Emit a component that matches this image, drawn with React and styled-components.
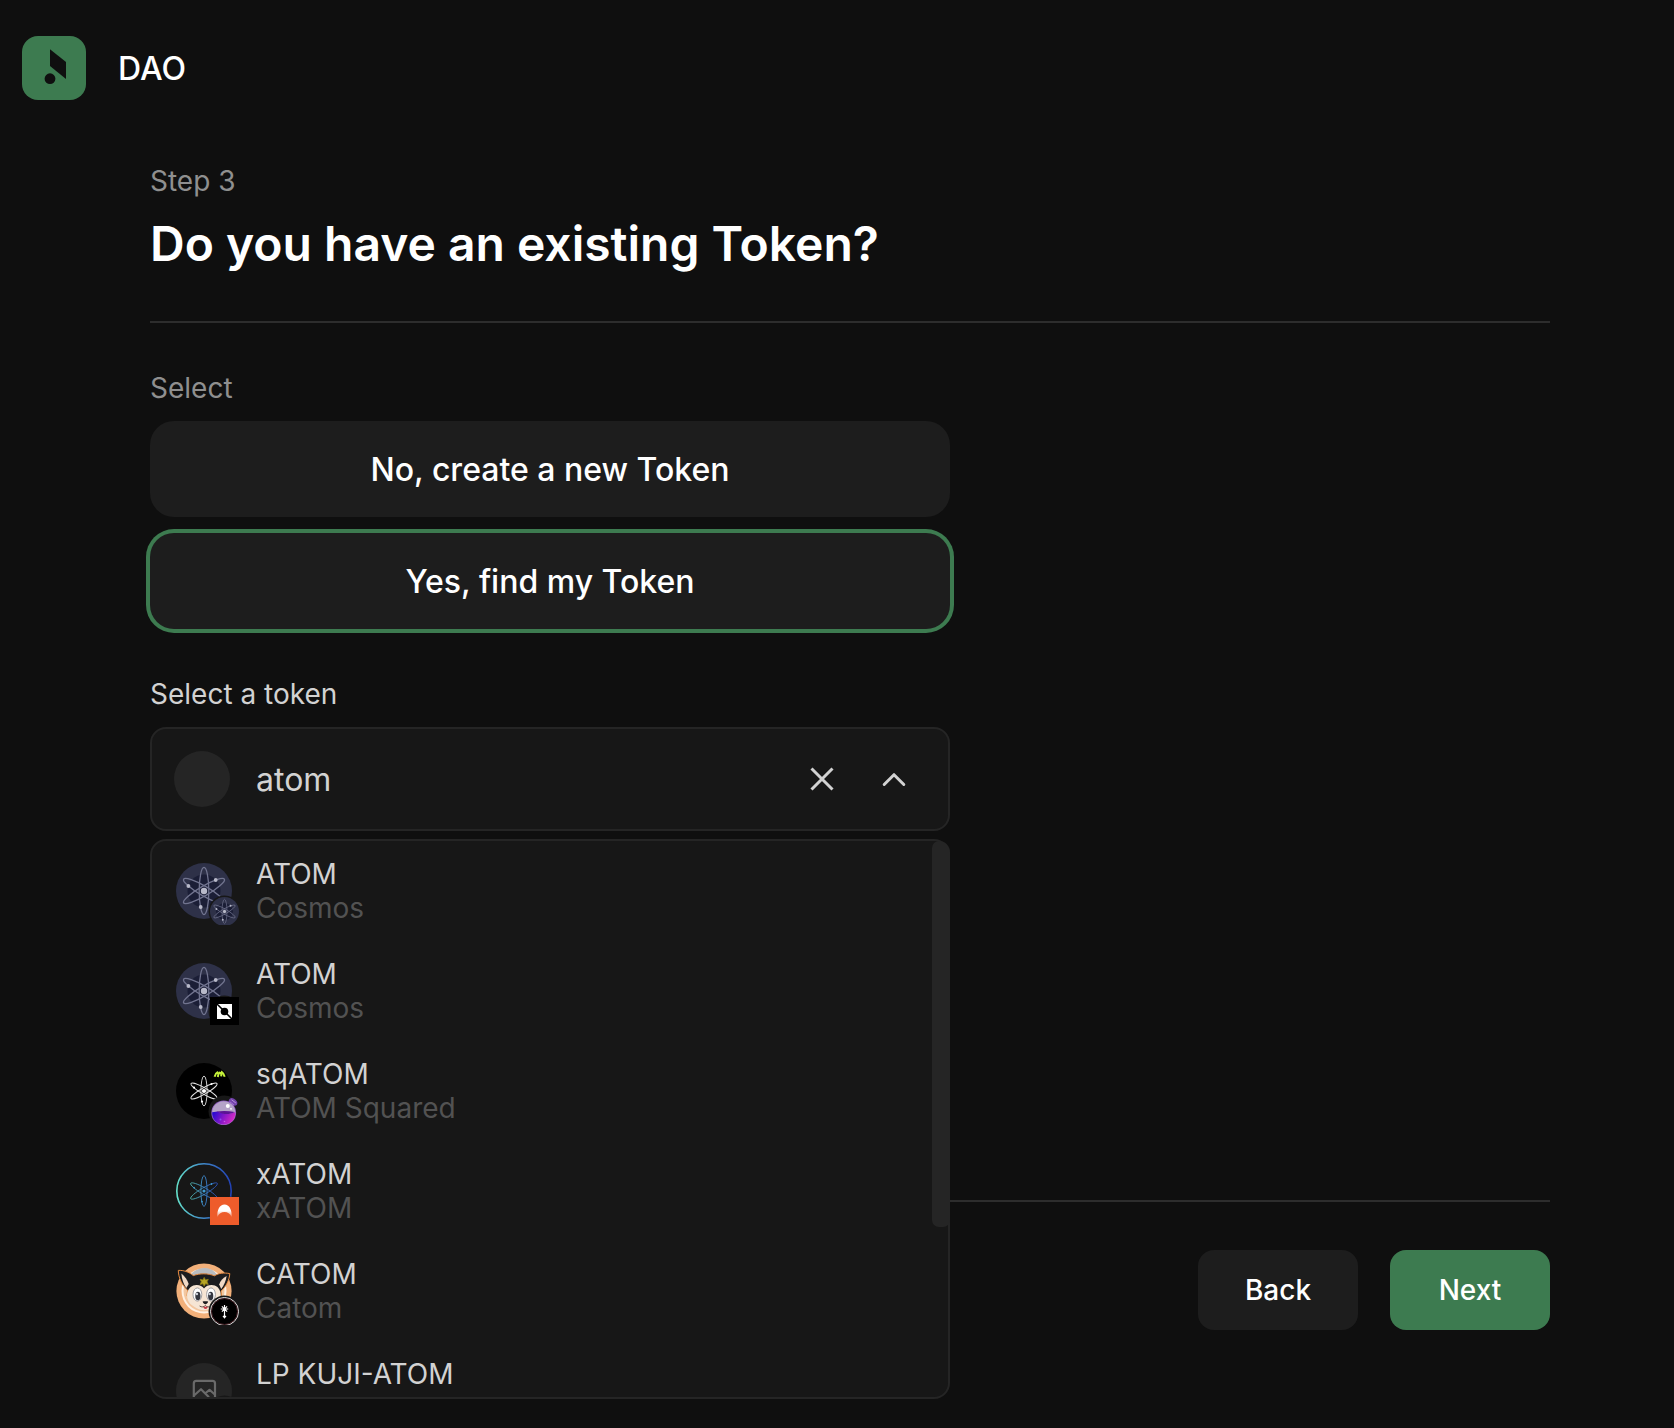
import React, { useState } from "react";
import styled, { createGlobalStyle, css } from "styled-components";

const color = {
  page: "#0f0f0f",
  panel: "#171717",
  surface: "#1d1d1d",
  line: "#252525",
  rule: "#2d2d2d",
  green: "#3d7b50",
  text: "#d2d2d2",
  muted: "#8f8f8f",
  faint: "#525252",
};

const GlobalStyle = createGlobalStyle`
  *, *::before, *::after { box-sizing: border-box; }
  body {
    margin: 0;
    background: ${color.page};
    color: #fff;
    font-family: Inter, "Liberation Sans", sans-serif;
    font-optical-sizing: none;
    -webkit-font-smoothing: antialiased;
  }
  button, input { font: inherit; font-optical-sizing: none; color: inherit; }
`;

const Page = styled.div`
  display: flex;
  flex-direction: column;
  min-height: 100vh;
`;

const Header = styled.header`
  display: flex;
  align-items: center;
  gap: 32px;
  padding: 36px 22px;
`;

const Logo = styled.svg`
  display: block;
  width: 64px;
  height: 64px;
`;

const Brand = styled.span`
  font-size: 32px;
  line-height: 39px;
  font-weight: 500;
`;

const Main = styled.main`
  flex: 1;
  display: flex;
  flex-direction: column;
  padding: 28px 124px 98px 150px;
`;

const Intro = styled.div`
  display: flex;
  flex-direction: column;
  gap: 16px;
  padding-bottom: 48px;
  border-bottom: 2px solid ${color.rule};
`;

const labelText = css`
  margin: 0;
  font-size: 28px;
  line-height: 34px;
  font-weight: 400;
`;

const Step = styled.p`
  ${labelText}
  color: ${color.muted};
`;

const Title = styled.h1`
  margin: 0;
  font-size: 48px;
  line-height: 59px;
  font-weight: 600;
`;

const Form = styled.div`
  flex: 1;
  display: flex;
  flex-direction: column;
  gap: 48px;
  width: 100%;
  max-width: 800px;
  padding: 48px 0;
`;

const Group = styled.div`
  display: flex;
  flex-direction: column;
  gap: 16px;
`;

const GroupLabel = styled.span`
  ${labelText}
  color: ${color.muted};
`;

const FieldLabel = styled.label`
  ${labelText}
  color: ${color.text};
`;

const Choice = styled.button`
  height: 96px;
  padding: 0 24px;
  border: 0;
  border-radius: 24px;
  background: ${color.surface};
  box-shadow: ${(p) => (p.$selected ? `0 0 0 4px ${color.green}` : "none")};
  font-size: 32px;
  font-weight: 500;
  cursor: pointer;
`;

const Combo = styled.div`
  position: relative;
`;

const Field = styled.div`
  display: flex;
  align-items: center;
  height: 104px;
  padding: 0 34px 0 22px;
  border: 2px solid ${color.line};
  border-radius: 16px;
  background: ${color.panel};
`;

const Blank = styled.span`
  flex: none;
  width: 56px;
  height: 56px;
  margin-right: 26px;
  border-radius: 50%;
  background: ${color.line};
`;

const Search = styled.input`
  flex: 1;
  min-width: 0;
  height: 56px;
  padding: 0;
  border: 0;
  outline: 0;
  background: transparent;
  color: ${color.text};
  font-size: 32px;
`;

const Actions = styled.div`
  display: flex;
  gap: 32px;
`;

const IconButton = styled.button`
  display: grid;
  place-items: center;
  width: 40px;
  height: 40px;
  padding: 0;
  border: 0;
  background: none;
  color: ${color.text};
  cursor: pointer;
`;

const Menu = styled.div`
  position: absolute;
  top: calc(100% + 8px);
  left: 0;
  right: 0;
  border: 2px solid ${color.line};
  border-radius: 16px;
  background: ${color.panel};
`;

const List = styled.ul`
  margin: 0;
  padding: 0;
  max-height: 556px;
  overflow-y: auto;
  scrollbar-width: none;
  border-radius: 14px;
  list-style: none;
`;

const Thumb = styled.span`
  position: absolute;
  top: 0;
  right: -2px;
  width: 18px;
  height: 386px;
  border-radius: 9px 14px 9px 9px;
  background: ${color.line};
`;

const Row = styled.li`
  display: flex;
  align-items: center;
  gap: 24px;
  height: 100px;
  padding: 0 24px;
  cursor: pointer;
`;

const Avatar = styled.span`
  position: relative;
  flex: none;
  width: 56px;
  height: 56px;

  > svg { display: block; width: 56px; height: 56px; }
`;

const Badge = styled.span`
  position: absolute;
  top: 34px;
  left: 34px;
  width: 29px;
  height: 28px;
  overflow: hidden;

  > svg { display: block; width: 29px; height: 29px; }
`;

const Names = styled.span`
  display: flex;
  flex-direction: column;
  height: 68px;
  font-size: 28px;
  line-height: 34px;
`;

const Symbol = styled.span`
  color: ${color.text};
`;

const FullName = styled.span`
  color: ${color.faint};
`;

const Footer = styled.footer`
  display: flex;
  justify-content: flex-end;
  gap: 32px;
  padding-top: 48px;
  border-top: 2px solid ${color.rule};
`;

const NavButton = styled.button`
  width: 160px;
  height: 80px;
  border: 0;
  border-radius: 16px;
  background: ${(p) => (p.$primary ? color.green : color.surface)};
  font-size: 28px;
  font-weight: 500;
  cursor: pointer;
`;

/* Three crossed orbits, drawn around the centre of a 56 unit square. */
function Orbits({ stroke, width = 1.3, rx = 4.8, ry = 23.6 }) {
  return (
    <g fill="none" stroke={stroke} strokeWidth={width}>
      {[0, 60, -60].map((angle) => (
        <ellipse key={angle} cx="28" cy="28" rx={rx} ry={ry} transform={`rotate(${angle} 28 28)`} />
      ))}
    </g>
  );
}

/* Round gap that keeps the badge apart from the token picture. */
const BadgeGap = () => <circle cx="48.5" cy="48.5" r="16" fill={color.panel} />;

function CosmosArt() {
  return (
    <>
      <circle cx="28" cy="28" r="28" fill="#2e3148" />
      <circle cx="28" cy="28" r="16.5" fill="#1b1e36" />
      <Orbits stroke="#71748f" />
      <g fill="#b8b9c9">
        <circle cx="28" cy="28" r="3.2" />
        <circle cx="12.4" cy="23" r="1.9" />
        <circle cx="39.7" cy="17" r="1.9" />
        <circle cx="24.7" cy="44" r="1.9" />
      </g>
    </>
  );
}

const CosmosIcon = () => (
  <svg viewBox="0 0 56 56" aria-hidden="true">
    <CosmosArt />
    <BadgeGap />
  </svg>
);

const CosmosBadge = () => (
  <svg viewBox="0 0 56 56" aria-hidden="true">
    <CosmosArt />
  </svg>
);

const SquaredIcon = () => (
  <svg viewBox="0 0 56 56" aria-hidden="true">
    <circle cx="28" cy="28" r="28" fill="#000" />
    <Orbits stroke="#e6e6e6" width={0.9} rx={3.1} ry={15} />
    <g fill="#fff">
      <circle cx="28" cy="28" r="2.1" />
      <circle cx="18" cy="24.6" r="1.1" />
      <circle cx="35.5" cy="21" r="1.1" />
      <circle cx="26" cy="38.6" r="1.1" />
    </g>
    <path
      d="M38.6 13.800c.6-2.400 1.800-4.200 3.400-5M41.800 14c.3-2 .9-3.800 2-5.200M44.800 8.600c.5 1.700.6 3.200.4 4.800M45 8.400c1.900 1.300 3 3.200 3.700 5.400"
      fill="none"
      stroke="#c4f03a"
      strokeWidth="2"
    />
    <BadgeGap />
  </svg>
);

const XAtomIcon = () => (
  <svg viewBox="0 0 56 56" aria-hidden="true">
    <defs>
      <linearGradient id="xatom-ring" gradientUnits="userSpaceOnUse" x1="0" y1="28" x2="56" y2="28">
        <stop offset="0" stopColor="#66e3cb" />
        <stop offset="0.5" stopColor="#3f86c9" />
        <stop offset="1" stopColor="#213fb5" />
      </linearGradient>
      <linearGradient id="xatom-orbit" gradientUnits="userSpaceOnUse" x1="13" y1="28" x2="43" y2="28">
        <stop offset="0" stopColor="#4fae9e" />
        <stop offset="0.5" stopColor="#3a7dbb" />
        <stop offset="1" stopColor="#2545ad" />
      </linearGradient>
    </defs>
    <circle cx="28" cy="28" r="27.2" fill="none" stroke="url(#xatom-ring)" strokeWidth="1.6" />
    <g fill="none" stroke="url(#xatom-orbit)" strokeWidth="1">
      <ellipse cx="28" cy="28" rx="3.1" ry="15.4" />
      <path d="M14.700 20.300c.9-1.500 7.500.7 14.800 4.900s12.700 9 11.800 10.500-7.500-.7-14.800-4.900-12.700-9-11.800-10.500z" />
      <path d="M41.300 20.300c-.9-1.500-7.500.7-14.800 4.900s-12.700 9-11.800 10.500 7.500-.7 14.800-4.900 12.700-9 11.800-10.500z" />
    </g>
    <g fill="#3f9ad0">
      <circle cx="28" cy="28" r="1.6" />
      <circle cx="18" cy="24.6" r="0.9" />
      <circle cx="35.5" cy="21" r="0.9" />
      <circle cx="26" cy="38.6" r="0.9" />
    </g>
    <BadgeGap />
  </svg>
);

const CatomIcon = () => (
  <svg viewBox="0 0 56 56" aria-hidden="true">
    <circle cx="28" cy="28" r="27.6" fill="#f2b07a" />
    <circle cx="28" cy="28" r="22.5" fill="#fff0e2" />
    <circle cx="28" cy="28" r="20.5" fill="#f3c7a0" />
    <path d="M14 12.5C18 7 24 4.8 29 5s9 2.500 12 6.5L35 14H19z" fill="#b9bcc0" />
    <path
      d="M2.300 7.400c5-.3 10.400 1.400 15 5.200 6.600-2.400 14.400-2.400 21.200.2C42.800 10 48 9.500 53.800 10.600c-.4 6.400-3.600 13-8.800 17.600l.6 4.200c-3.600 9-30.800 9-34.600 0l.6-5.200C6 22.200 2.300 14.400 2.300 7.400z"
      fill="#1c1c1f"
      stroke="#e58a41"
      strokeWidth="1"
    />
    <path d="M5.400 10.400c3.400 2.800 6 6.400 7.300 10.600l-2.400 4C7.300 20.600 5.600 15.600 5.400 10.400z" fill="#f0d9c6" />
    <path d="M50.600 13c-4 2-6.400 5-7.400 8.600l2 4.400c3-3.800 4.800-8.200 5.400-13z" fill="#f0d9c6" />
    <path
      d="M11.200 30c1.400-5.400 5.200-8.200 9.600-8 3.200.2 5.600 1.400 7.200 3.400 1.800-2.200 4.400-3.400 7.600-3.400 4.600 0 8 2.800 9 8 .8 4.400-1 8.800-4.400 11.600-3.400 2.900-7.800 5.600-12.400 5.600s-9-2.400-12.400-5.400c-3.200-2.900-5-7-4.200-11.800z"
      fill="#f6e5d4"
    />
    <ellipse cx="21.400" cy="31.500" rx="4.400" ry="6.600" fill="#fff" stroke="#8d8d93" strokeWidth=".8" />
    <ellipse cx="35" cy="31.500" rx="4.400" ry="6.600" fill="#fff" stroke="#8d8d93" strokeWidth=".8" />
    <ellipse cx="21.900" cy="33" rx="2.600" ry="4.300" fill="#34363f" />
    <ellipse cx="34.700" cy="33" rx="2.600" ry="4.300" fill="#34363f" />
    <circle cx="20.900" cy="31" r="1.200" fill="#cfd3dc" />
    <circle cx="33.700" cy="31" r="1.200" fill="#cfd3dc" />
    <path d="M26.600 38.600c1.400-.6 4-.6 5.600 0-.6 1.800-1.700 2.700-2.800 2.700s-2.200-.9-2.800-2.700z" fill="#1c1c1f" />
    <path d="M23.600 43c2 1.400 4.400 1.200 5.800-.6 1.400 1.800 3.600 2 5.600.8" fill="none" stroke="#3a2a26" strokeWidth=".8" />
    <path d="M27.400 43.800h4.200c0 3-4.200 3-4.200 0z" fill="#c53945" />
    <path d="M28.200 14.400l1.300 2.500 2.800-.6-1.200 2.500 1.200 2.600-2.800-.6-1.300 2.400-1.300-2.400-2.800.6 1.200-2.600-1.200-2.500 2.800.6z" fill="#b7a524" stroke="#8a7a14" strokeWidth=".8" />
    <BadgeGap />
  </svg>
);

const EmptyIcon = () => (
  <svg viewBox="0 0 56 56" aria-hidden="true">
    <circle cx="28" cy="28" r="28" fill={color.line} />
    <g fill="none" stroke="#6a6a6a" strokeWidth="2.2" strokeLinejoin="round">
      <rect x="17.8" y="17.9" width="21.2" height="21.2" rx="2.5" />
      <path d="M18 32.500l7-6.300 8 8M29 30.500l4.500-3.700 5.300 4.700" />
    </g>
    <BadgeGap />
  </svg>
);

const SquareBadge = () => (
  <svg viewBox="0 0 29 29" aria-hidden="true">
    <rect width="29" height="29" fill="#000" />
    <rect x="7" y="7" width="15" height="15" fill="#fff" />
    <circle cx="14.5" cy="14.5" r="3.8" fill="#000" />
    <path d="M6.500 6.500l16 16" stroke="#000" strokeWidth="1.5" />
  </svg>
);

const FlaskBadge = () => (
  <svg viewBox="0 0 29 29" aria-hidden="true">
    <defs>
      <linearGradient id="flask-fluid" x1="0" y1="0.300" x2="1" y2="0.600">
        <stop offset="0" stopColor="#2a0bd0" />
        <stop offset="0.5" stopColor="#8a18c8" />
        <stop offset="1" stopColor="#e02fc4" />
      </linearGradient>
    </defs>
    <path d="M19 3c1-2 3-2.500 5-1.300s3.800 3 3.300 5-2.300 2.300-3.700 1.700l-1.700 2.100-4.300-3.500z" fill="#7442ad" />
    <path d="M19.800 4.800l4 3.200M21.500 2.800l4.400 3.200" stroke="#b492d6" strokeWidth="1" />
    <circle cx="13.700" cy="15.800" r="12.400" fill="#8e5bc0" />
    <circle cx="13.700" cy="15.800" r="11.600" fill="#b5a3c8" />
    <path d="M2.100 15.300c3.800-1.300 7.300-.3 10.800.8 4.200 1.200 8 .3 12.400-.8.600 7-4.800 12.200-11.600 12.200S1.800 22.300 2.100 15.300z" fill="url(#flask-fluid)" />
    <path d="M6 14.600c6-.8 12-.8 18.800.4-4.800 2.400-8.800 2.600-12.600 1.400z" fill="#5c1495" />
    <circle cx="17.800" cy="9" r="2" fill="#fff" />
    <circle cx="21" cy="11.800" r=".9" fill="#fff" />
    <circle cx="10.500" cy="22.500" r="1" fill="#8d50e8" />
    <circle cx="14.500" cy="24.500" r=".8" fill="#c45be8" />
  </svg>
);

const ArcBadge = () => (
  <svg viewBox="0 0 29 29" aria-hidden="true">
    <defs>
      <linearGradient id="arc-fade" x1="0" y1="0" x2="0" y2="1">
        <stop offset="0.5" stopColor="#fff" />
        <stop offset="1" stopColor="#fff" stopOpacity="0.25" />
      </linearGradient>
    </defs>
    <rect width="29" height="29" fill="#ee5c2b" />
    <path d="M7.400 20c-.6-7 2.400-12.400 7.100-12.400S22.200 13 21.600 20c-1.400-3.200-4-5-7.100-5s-5.700 1.800-7.100 5z" fill="url(#arc-fade)" />
  </svg>
);

const StarBadge = () => (
  <svg viewBox="0 0 29 29" aria-hidden="true">
    <circle cx="14.5" cy="14.5" r="14" fill="#000" stroke="#e8e8e8" strokeWidth="1" />
    <circle cx="14.5" cy="14.5" r="13" fill="none" stroke="#5a2a30" strokeWidth=".8" />
    <path d="M14.500 8v12.500M10.800 12h7.400M11.900 9.400l5.200 5.200M17.100 9.400l-5.200 5.200M13 18.800l1.500 2 1.500-2" fill="none" stroke="#fff" strokeWidth="1.2" />
  </svg>
);

const tokens = [
  { id: "atom-hub", symbol: "ATOM", name: "Cosmos", Icon: CosmosIcon, Chain: CosmosBadge },
  { id: "atom-square", symbol: "ATOM", name: "Cosmos", Icon: CosmosIcon, Chain: SquareBadge },
  { id: "sqatom", symbol: "sqATOM", name: "ATOM Squared", Icon: SquaredIcon, Chain: FlaskBadge },
  { id: "xatom", symbol: "xATOM", name: "xATOM", Icon: XAtomIcon, Chain: ArcBadge },
  { id: "catom", symbol: "CATOM", name: "Catom", Icon: CatomIcon, Chain: StarBadge },
  { id: "lp-kuji", symbol: "LP KUJI-ATOM", Icon: EmptyIcon },
];

function TokenRow({ token, onPick }) {
  const { Icon, Chain } = token;
  return (
    <Row role="option" aria-selected="false" onClick={() => onPick(token.symbol)}>
      <Avatar>
        <Icon />
        {Chain && (
          <Badge>
            <Chain />
          </Badge>
        )}
      </Avatar>
      <Names>
        <Symbol>{token.symbol}</Symbol>
        {token.name && <FullName>{token.name}</FullName>}
      </Names>
    </Row>
  );
}

function TokenSelect() {
  const [query, setQuery] = useState("atom");
  const [open, setOpen] = useState(true);
  const shown = tokens.filter((t) => t.symbol.toLowerCase().includes(query.toLowerCase()));

  return (
    <Group>
      <FieldLabel htmlFor="token">Select a token</FieldLabel>
      <Combo>
        <Field>
          <Blank />
          <Search
            id="token"
            type="text"
            role="combobox"
            aria-expanded={open}
            aria-controls="token-list"
            autoComplete="off"
            value={query}
            onChange={(e) => setQuery(e.target.value)}
          />
          <Actions>
            <IconButton type="button" aria-label="Clear" onClick={() => setQuery("")}>
              <svg width="24" height="24" viewBox="0 0 24 24" fill="none" stroke="currentColor" strokeWidth="3">
                <path d="M1.500 1.500l21 21M22.500 1.500l-21 21" />
              </svg>
            </IconButton>
            <IconButton type="button" aria-label="Toggle list" onClick={() => setOpen(!open)}>
              <svg width="24" height="24" viewBox="0 0 24 24" fill="none" stroke="currentColor" strokeWidth="3" strokeLinejoin="round" strokeLinecap="round">
                <path d="M2.200 17.500L12 7.700l9.800 9.800" />
              </svg>
            </IconButton>
          </Actions>
        </Field>
        {open && (
          <Menu>
            <List id="token-list" role="listbox" aria-label="Tokens">
              {shown.map((token) => (
                <TokenRow key={token.id} token={token} onPick={setQuery} />
              ))}
            </List>
            <Thumb />
          </Menu>
        )}
      </Combo>
    </Group>
  );
}

export default function App() {
  const [existing, setExisting] = useState(true);

  return (
    <>
      <GlobalStyle />
      <Page>
        <Header>
          <Logo viewBox="0 0 64 64" aria-hidden="true">
            <rect width="64" height="64" rx="16" fill={color.green} />
            <path d="M28 13.300L44 26v17L28 30z" fill={color.page} />
            <circle cx="28" cy="42.700" r="5.400" fill={color.page} />
          </Logo>
          <Brand>DAO</Brand>
        </Header>
        <Main>
          <Intro>
            <Step>Step 3</Step>
            <Title>Do you have an existing Token?</Title>
          </Intro>
          <Form>
            <Group role="group" aria-labelledby="choice-label">
              <GroupLabel id="choice-label">Select</GroupLabel>
              <Choice type="button" $selected={!existing} aria-pressed={!existing} onClick={() => setExisting(false)}>
                No, create a new Token
              </Choice>
              <Choice type="button" $selected={existing} aria-pressed={existing} onClick={() => setExisting(true)}>
                Yes, find my Token
              </Choice>
            </Group>
            {existing && <TokenSelect />}
          </Form>
          <Footer>
            <NavButton type="button">Back</NavButton>
            <NavButton type="button" $primary>
              Next
            </NavButton>
          </Footer>
        </Main>
      </Page>
    </>
  );
}
